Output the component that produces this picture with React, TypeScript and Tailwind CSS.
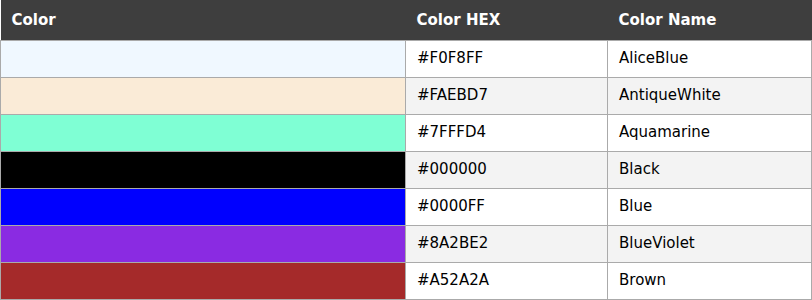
import React from "react";

const colors = [
  { hex: "#F0F8FF", name: "AliceBlue" },
  { hex: "#FAEBD7", name: "AntiqueWhite" },
  { hex: "#7FFFD4", name: "Aquamarine" },
  { hex: "#000000", name: "Black" },
  { hex: "#0000FF", name: "Blue" },
  { hex: "#8A2BE2", name: "BlueViolet" },
  { hex: "#A52A2A", name: "Brown" },
];

export default function App() {
  return (
    <div className="w-[812px] h-[300px] bg-white font-['DejaVu_Sans',Verdana,sans-serif] overflow-hidden">
      <table className="w-[812px] border-collapse table-fixed text-[15px] text-black">
        <colgroup>
          <col className="w-[405px]" />
          <col className="w-[202px]" />
          <col />
        </colgroup>
        <thead>
          <tr className="bg-[#3e3e3e] text-white h-[40px]">
            <th className="text-left font-bold px-[11px]">Color</th>
            <th className="text-left font-bold px-[11px]">Color HEX</th>
            <th className="text-left font-bold px-[11px]">Color Name</th>
          </tr>
        </thead>
        <tbody>
          {colors.map((c, i) => (
            <tr key={c.hex} className={`h-[37px] ${i % 2 === 1 ? "bg-[#f3f3f3]" : "bg-white"}`}>
              <td className="border border-[#aaaaaa]" style={{ backgroundColor: c.hex }}></td>
              <td className="border border-[#aaaaaa] px-[11px]">{c.hex}</td>
              <td className="border border-[#aaaaaa] px-[11px]">{c.name}</td>
            </tr>
          ))}
        </tbody>
      </table>
    </div>
  );
}
